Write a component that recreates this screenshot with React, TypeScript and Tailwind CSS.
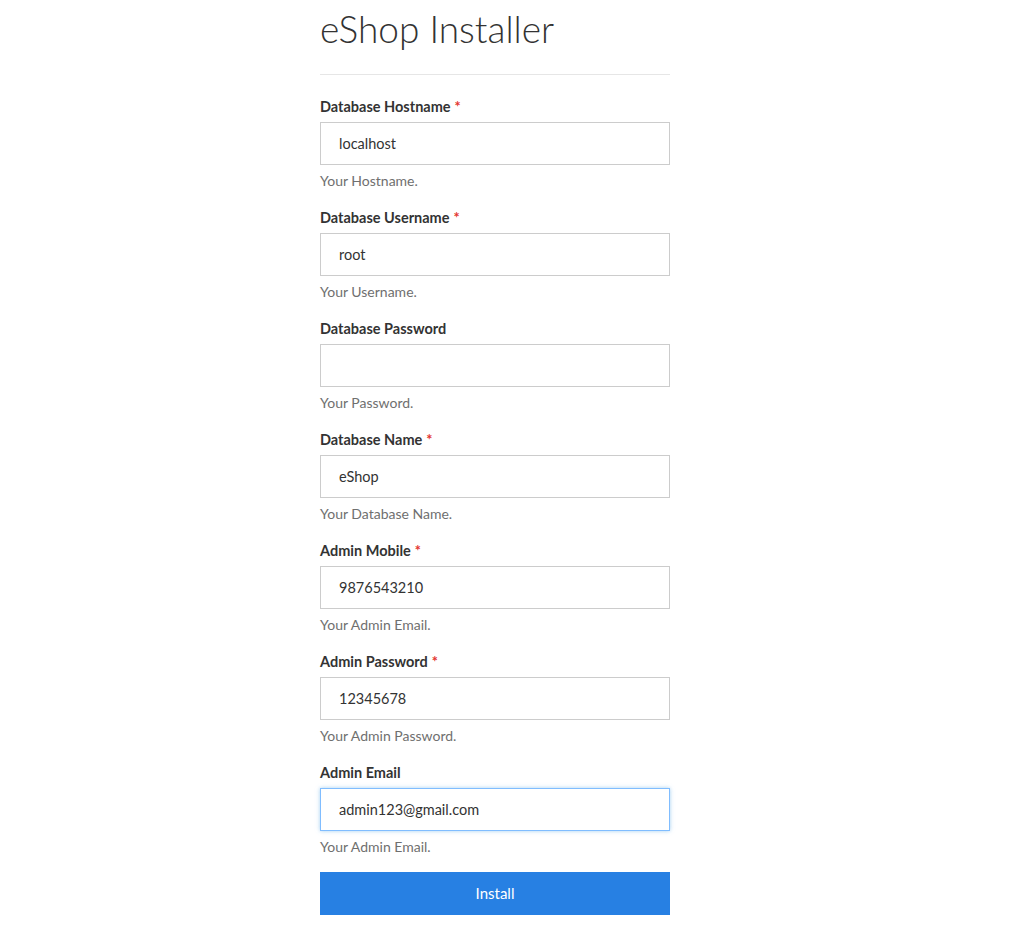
import { useState } from "react";

// Installer form — single column, fixed 350px wide, centered-ish on the page.

type Field = {
  label: string;
  required: boolean;
  value: string;
  help: string;
  type?: string;
  focused?: boolean;
};

const FIELDS: Field[] = [
  { label: "Database Hostname", required: true, value: "localhost", help: "Your Hostname." },
  { label: "Database Username", required: true, value: "root", help: "Your Username." },
  { label: "Database Password", required: false, value: "", help: "Your Password.", type: "password" },
  { label: "Database Name", required: true, value: "eShop", help: "Your Database Name." },
  { label: "Admin Mobile", required: true, value: "9876543210", help: "Your Admin Email." },
  { label: "Admin Password", required: true, value: "12345678", help: "Your Admin Password." },
  { label: "Admin Email", required: false, value: "admin123@gmail.com", help: "Your Admin Email.", focused: true },
];

export default function App() {
  const [values, setValues] = useState(FIELDS.map((f) => f.value));

  return (
    <div
      className="min-h-screen bg-white text-[#333]"
      style={{ fontFamily: "Lato, 'Open Sans', sans-serif" }}
    >
      <div className="ml-[320px] w-[350px] pt-[7px]">
        <h1 className="text-[37px] font-light leading-[44px] text-[#333]">eShop Installer</h1>
        <hr className="mt-[23px] border-t border-[#e6e6e6]" />

        <form className="mt-[22px]" onSubmit={(e) => e.preventDefault()}>
          {FIELDS.map((f, i) => (
            <div key={f.label} className="mb-[17px]">
              <label className="block text-[14.5px] font-bold leading-[20px] text-[#333]">
                {f.label}
                {f.required && <span className="ml-1 text-[#e3342f]">*</span>}
              </label>
              <input
                type="text"
                value={values[i]}
                autoFocus={f.focused}
                onChange={(e) =>
                  setValues((v) => v.map((x, j) => (j === i ? e.target.value : x)))
                }
                className={
                  f.focused
                    ? "mt-[5px] block h-[43px] w-full border border-[#80bdff] bg-white px-[18px] text-[14.5px] text-[#333] shadow-[0_0_4px_rgba(102,175,233,0.6)] outline-none"
                    : "mt-[5px] block h-[43px] w-full border border-[#ccc] bg-white px-[18px] text-[14.5px] text-[#333] outline-none"
                }
              />
              <p className="mt-[6px] text-[14px] leading-[20px] text-[#6f6f6f]">{f.help}</p>
            </div>
          ))}
          <button
            type="submit"
            className="-mt-[2px] block h-[43px] w-full bg-[#2780e3] text-[15px] text-white"
          >
            Install
          </button>
        </form>
      </div>
    </div>
  );
}
